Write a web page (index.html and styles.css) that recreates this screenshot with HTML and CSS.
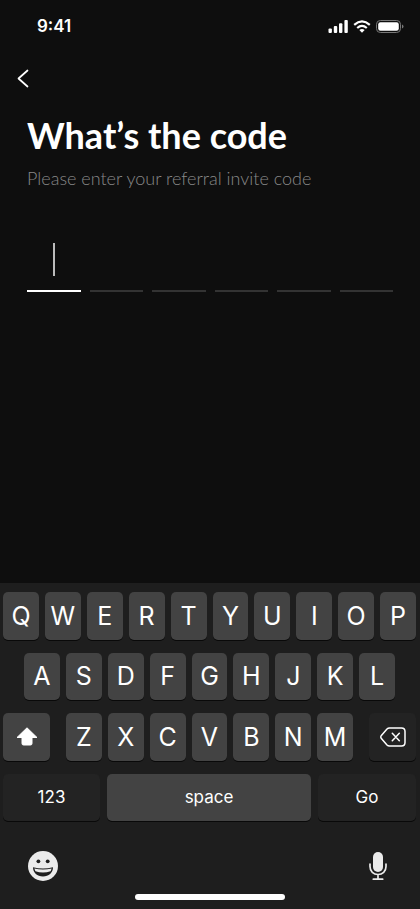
FILE: index.html
```html
<!DOCTYPE html>
<html lang="en">
<head>
<meta charset="utf-8">
<meta name="viewport" content="width=device-width, initial-scale=1">
<title>Invite code</title>
<link rel="stylesheet" href="styles.css">
</head>
<body>
<header class="status">
  <time class="clock">9:41</time>
  <div class="indicators">
    <svg width="20" height="13" viewBox="0 0 20 13" fill="#fff" aria-hidden="true"><rect x=".5" y="8.5" width="3.4" height="4.5" rx="1"/><rect x="5.8" y="6" width="3.4" height="7" rx="1"/><rect x="11" y="3.3" width="3.4" height="9.7" rx="1"/><rect x="16.4" y="0" width="3.4" height="13" rx="1"/></svg>
    <svg width="18" height="13" viewBox="0 0 18 13" aria-hidden="true"><path d="M1.2 4.8Q9-2 16.8 4.8M4.2 8Q9 3.8 13.8 8" fill="none" stroke="#fff" stroke-width="2.2"/><path d="M6.3 10Q9 7.9 11.7 10L9 12.8Z" fill="#fff"/></svg>
    <svg width="28" height="13" viewBox="0 0 28 13" aria-hidden="true"><rect x=".5" y=".5" width="24" height="12" rx="3.8" fill="none" stroke="#777"/><rect x="2.2" y="2.2" width="20.6" height="8.6" rx="2.2" fill="#fff"/><path d="M26 4.5q1.5.6 1.5 2t-1.5 2z" fill="#777"/></svg>
  </div>
</header>
<main class="content">
  <button class="back" type="button" aria-label="Back"><svg width="12" height="19" viewBox="0 0 12 19" fill="none" stroke="#fff" stroke-width="1.7" stroke-linecap="round" stroke-linejoin="round"><path d="M10.5 1.5L1.5 9.5L10.5 17.5"/></svg></button>
  <h1 class="title">What’s the code</h1>
  <p class="subtitle">Please enter your referral invite code</p>
  <form class="code">
    <label class="cell active"><input type="text" maxlength="1" aria-label="Character 1"></label>
    <label class="cell"><input type="text" maxlength="1" aria-label="Character 2"></label>
    <label class="cell"><input type="text" maxlength="1" aria-label="Character 3"></label>
    <label class="cell"><input type="text" maxlength="1" aria-label="Character 4"></label>
    <label class="cell"><input type="text" maxlength="1" aria-label="Character 5"></label>
    <label class="cell"><input type="text" maxlength="1" aria-label="Character 6"></label>
  </form>
</main>
<section class="keyboard" aria-label="Keyboard">
  <div class="rows">
    <div class="row top">
      <button class="key">Q</button><button class="key">W</button><button class="key">E</button><button class="key">R</button><button class="key">T</button><button class="key">Y</button><button class="key">U</button><button class="key">I</button><button class="key">O</button><button class="key">P</button>
    </div>
    <div class="row home">
      <button class="key">A</button><button class="key">S</button><button class="key">D</button><button class="key">F</button><button class="key">G</button><button class="key">H</button><button class="key">J</button><button class="key">K</button><button class="key">L</button>
    </div>
    <div class="row lower">
      <button class="key" aria-label="Shift"><svg width="22" height="19" viewBox="0 0 22 19" fill="#fff" stroke="#fff" stroke-linejoin="round"><path d="M11 .8L21 10.5H16V16.5Q16 18 14.5 18H7.5Q6 18 6 16.5V10.5H1Z"/></svg></button>
      <div class="row letters">
        <button class="key">Z</button><button class="key">X</button><button class="key">C</button><button class="key">V</button><button class="key">B</button><button class="key">N</button><button class="key">M</button>
      </div>
      <button class="key dark" aria-label="Delete"><svg width="26" height="20" viewBox="0 0 26 20" fill="none" stroke="#fff" stroke-width="1.5" stroke-linecap="round" stroke-linejoin="round"><path d="M9.5 1H21.5Q25 1 25 4.5V15.5Q25 19 21.5 19H9.5Q8 19 7 18L1.4 11.6Q.2 10 1.4 8.4L7 2Q8 1 9.5 1ZM12.3 6.3L19.3 13.7M19.3 6.3L12.3 13.7"/></svg></button>
    </div>
    <div class="row bottom">
      <button class="key dark word">123</button><button class="key word">space</button><button class="key dark word">Go</button>
    </div>
  </div>
  <div class="tools">
    <button class="tool" aria-label="Emoji"><svg width="30" height="30" viewBox="0 0 30 30"><circle cx="15" cy="15" r="15" fill="#ebebeb"/><circle cx="10.4" cy="10.3" r="1.9" fill="#1e1e1e"/><circle cx="19.7" cy="10.3" r="1.9" fill="#1e1e1e"/><path d="M5 16.2Q15 18.6 25 16.2C25 21.5 20.8 25.5 15 25.5S5 21.5 5 16.2Z" fill="#1e1e1e"/><path d="M6.3 17.6Q15 19.4 23.7 17.6L22.6 20.2Q15 22.6 7.4 20.2Z" fill="#ebebeb"/></svg></button>
    <button class="tool" aria-label="Dictate"><svg width="18" height="30" viewBox="0 0 18 30"><rect x="4" y="1" width="10" height="20" rx="5" fill="#ebebeb"/><path d="M1 13V15.5C1 20.5 4.5 23.5 9 23.5S17 20.5 17 15.5V13M9 23.5V28M4.3 28.2H13.7" fill="none" stroke="#ebebeb" stroke-width="1.7" stroke-linecap="round"/></svg></button>
  </div>
  <div class="home-bar"></div>
</section>
</body>
</html>
```
FILE: styles.css
```css
* { box-sizing: border-box; }

body {
  margin: 0;
  min-height: 100vh;
  display: flex;
  flex-direction: column;
  background: #0e0e0e;
  color: #fff;
  font-family: Inter, "Liberation Sans", sans-serif;
}

button {
  padding: 0;
  border: 0;
  background: none;
  color: inherit;
  font: inherit;
}

svg { display: block; }

.status {
  display: flex;
  justify-content: space-between;
  align-items: center;
  padding: 16px 16px 0 37px;
}

.clock {
  font-size: 17px;
  line-height: 20px;
  font-weight: 600;
}

.indicators {
  display: flex;
  gap: 5px;
}

.content {
  flex: 1;
  padding: 33px 27px 0;
}

.back {
  display: block;
  margin-left: -10px;
}

.title {
  margin: 25px 0 0;
  font: 700 36px/44px Lato, sans-serif;
}

.subtitle {
  margin: 9px 0 0;
  color: #888;
  font: 300 18px/24px Lato, sans-serif;
}

.code {
  display: grid;
  grid-template-columns: repeat(6, 1fr);
  gap: 9px;
  margin-top: 44px;
}

.cell {
  position: relative;
  border-bottom: 2px solid #333;
}

.cell input {
  display: block;
  width: 100%;
  height: 56px;
  padding: 0;
  border: 0;
  outline: 0;
  background: none;
  color: #fff;
  font: 700 32px/40px Lato, sans-serif;
  text-align: center;
}

.active { border-color: #fff; }

.active::after {
  content: "";
  position: absolute;
  top: 9px;
  bottom: 14px;
  left: calc(50% - 1px);
  width: 2px;
  background: #bbb;
}

.keyboard {
  padding: 9px 4px 9px 3px;
  background: #1e1e1e;
}

.rows {
  display: grid;
  grid-template-rows: repeat(4, 1fr);
  gap: 13px;
  height: 229px;
}

.row {
  display: grid;
  gap: 6px;
}

.top { grid-template-columns: repeat(10, 1fr); }
.home { grid-template-columns: repeat(9, 1fr); padding: 0 21px; }
.lower { grid-template-columns: 47px 1fr 47px; gap: 16px; }
.letters { grid-template-columns: repeat(7, 1fr); }
.bottom { grid-template-columns: 97px 1fr 98px; gap: 7px; }

.key {
  display: flex;
  align-items: center;
  justify-content: center;
  border-radius: 5px;
  background: #434343;
  box-shadow: 0 1px 0 #090909;
  font-size: 25px;
}

.dark { background: #232323; }
.word { font-size: 17px; }

.tools {
  display: flex;
  justify-content: space-between;
  padding: 30px 29px 0 25px;
}

.home-bar {
  width: 150px;
  height: 6px;
  margin: 13px auto 0;
  border-radius: 3px;
  background: #fff;
}
```
